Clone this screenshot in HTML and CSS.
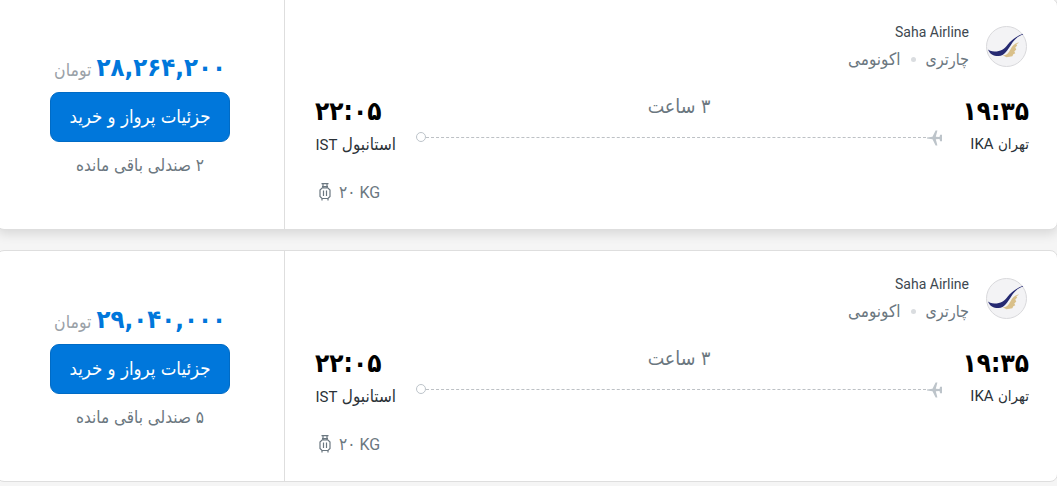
FILE: index.html
```
<!DOCTYPE html>
<html lang="fa" dir="rtl">
<head>
  <meta charset="UTF-8">
  <title>Flights</title>
  <link rel="stylesheet" href="styles.css">
</head>
<body>

  <svg width="0" height="0" class="sprite">
    <symbol id="plane" viewBox="0 0 16 16">
      <path d="M1 7.500 6.500 6.700 9.600.500h1.800L9.800 6.700l3.700.2.600-2.200H16v6.600h-1.900L13.500 9.100l-3.700.2 1.600 6.200H9.600L6.500 9.300 1 8.500Z" fill="#bdc4ca"/>
    </symbol>
    <symbol id="bag" viewBox="0 0 12 18">
      <path d="M2.500.7h7M4 1v4M8 1v4M3 3.700h6M3 5h6l2 2v6.500l-2 2H3l-2-2V7ZM4.500 7.500v5.500M7.500 7.500v5.500M3 15.500v2M9 15.500v2" fill="none" stroke="#6b7780" stroke-width="1.200"/>
    </symbol>
    <symbol id="saha" viewBox="0 0 40 40">
      <path d="M33 16c-4 0-7 3-9 7-2 4-4 6-8 6l4 2 6-1 1-2 2-1-1-2 2-2-1-2 2-2-1-1 3-2Z" fill="#d9c08a"/>
      <path d="M1 23c3 2 6 2 9 2 6 0 9-4 13-9 4-4 8-7 14-9v.8c-6 2-9 5-12 10-4 6-7 12-13 12C7 30 3 28 1 23Z" fill="#262a72"/>
    </symbol>
  </svg>

  <div class="list">
    <div class="card">
      <div class="flight">
        <div class="airline">
          <div class="logo"><svg width="39" height="39"><use href="#saha"/></svg></div>
          <div>
            <div class="name">Saha Airline</div>
            <div class="tags"><span class="charter">چارتری</span><i class="dot"></i><span class="economy">اکونومی</span></div>
          </div>
        </div>
        <div class="route">
          <div class="stop">
            <div class="time">۱۹:۳۵</div>
            <div class="city"><span>تهران</span> <b>IKA</b></div>
          </div>
          <div class="path">
            <div class="duration">۳ ساعت</div>
            <div class="track">
              <svg width="16" height="16"><use href="#plane"/></svg>
              <span class="line"></span>
              <span class="ring"></span>
            </div>
          </div>
          <div class="stop end">
            <div class="time">۲۲:۰۵</div>
            <div class="city"><span>استانبول</span> <b>IST</b></div>
          </div>
        </div>
        <div class="baggage" dir="ltr">
          <svg width="12" height="18"><use href="#bag"/></svg>
          <span><span class="num">۲۰</span> KG</span>
        </div>
      </div>
      <div class="buy">
        <div class="price"><strong>۲۸,۲۶۴,۲۰۰</strong><span>تومان</span></div>
        <button class="btn">جزئیات پرواز و خرید</button>
        <div class="seats">۲ صندلی باقی مانده</div>
      </div>
    </div>

    <div class="card">
      <div class="flight">
        <div class="airline">
          <div class="logo"><svg width="39" height="39"><use href="#saha"/></svg></div>
          <div>
            <div class="name">Saha Airline</div>
            <div class="tags"><span class="charter">چارتری</span><i class="dot"></i><span class="economy">اکونومی</span></div>
          </div>
        </div>
        <div class="route">
          <div class="stop">
            <div class="time">۱۹:۳۵</div>
            <div class="city"><span>تهران</span> <b>IKA</b></div>
          </div>
          <div class="path">
            <div class="duration">۳ ساعت</div>
            <div class="track">
              <svg width="16" height="16"><use href="#plane"/></svg>
              <span class="line"></span>
              <span class="ring"></span>
            </div>
          </div>
          <div class="stop end">
            <div class="time">۲۲:۰۵</div>
            <div class="city"><span>استانبول</span> <b>IST</b></div>
          </div>
        </div>
        <div class="baggage" dir="ltr">
          <svg width="12" height="18"><use href="#bag"/></svg>
          <span><span class="num">۲۰</span> KG</span>
        </div>
      </div>
      <div class="buy">
        <div class="price"><strong>۲۹,۰۴۰,۰۰۰</strong><span>تومان</span></div>
        <button class="btn">جزئیات پرواز و خرید</button>
        <div class="seats">۵ صندلی باقی مانده</div>
      </div>
    </div>
  </div>

</body>
</html>
```
FILE: styles.css
```
* {
  box-sizing: border-box;
}

body {
  margin: 0;
  height: 486px;
  background: #f5f5f5;
  font-family: "DejaVu Sans Condensed", "DejaVu Sans", sans-serif;
  font-stretch: condensed;
  color: #6b7780;
  overflow: hidden;
}

.sprite {
  position: absolute;
}

.list {
  margin: -2px -1px 0 -4px;
}

.card {
  display: flex;
  height: 232px;
  margin-bottom: 20px;
  background: #fff;
  border: 1px solid #dedede;
  border-radius: 8px;
}

.card:first-child {
  box-shadow: 0 4px 12px rgba(0, 0, 0, 0.12);
}

.flight {
  flex: 1;
  padding: 20px 28px 0 30px;
}

.airline {
  display: flex;
  gap: 17px;
  height: 56px;
}

.logo {
  width: 41px;
  height: 41px;
  margin: 7px 2px 0 0;
  border: 1px solid #d9d9dc;
  border-radius: 50%;
  background: #f3f3f5;
}

.logo svg {
  display: block;
}

.name {
  font: 14px/26px Roboto, sans-serif;
  color: #3e4850;
  white-space: nowrap;
}

.tags {
  display: flex;
  align-items: center;
  height: 28px;
  font-size: 16px;
}

.dot {
  width: 5px;
  height: 5px;
  margin: 0 10px;
  border-radius: 50%;
  background: #dadde0;
}

.economy {
  font-size: 17px;
}

.route {
  display: flex;
  height: 94px;
  padding-top: 18px;
}

.time {
  font-size: 26px;
  font-weight: bold;
  line-height: 36px;
  color: #000;
}

.city {
  font-size: 15px;
  line-height: 30px;
  color: #2b3238;
  white-space: nowrap;
}

.city b {
  font: 15px Roboto, sans-serif;
}

.stop {
  width: 87px;
}

.end {
  width: 101px;
  direction: ltr;
}

.end .city {
  direction: rtl;
  text-align: right;
  width: 81px;
}

.end .city span {
  font-size: 17px;
}

.path {
  flex: 1;
}

.duration {
  font-size: 19.5px;
  line-height: 27px;
  text-align: center;
}

.track {
  display: flex;
  align-items: center;
  height: 34px;
}

.track svg {
  margin-top: 2px;
}

.line {
  flex: 1;
  border-top: 1px dashed #bdc1c5;
}

.ring {
  width: 10px;
  height: 10px;
  border: 1px solid #bdc4ca;
  border-radius: 50%;
}

.baggage {
  display: flex;
  align-items: center;
  gap: 8px;
  height: 38px;
  padding: 7px 0 0 4px;
  font: 16px Roboto, sans-serif;
}

.num {
  font: 17px "DejaVu Sans Condensed", "DejaVu Sans", sans-serif;
}

.buy {
  display: flex;
  flex-direction: column;
  align-items: center;
  width: 288px;
  padding: 50px 4px 0 3px;
  border-right: 1px solid #dedede;
}

.price {
  display: flex;
  align-items: baseline;
  gap: 5px;
  height: 43px;
  line-height: 36px;
}

.price strong {
  font-size: 25.5px;
  color: #0077db;
}

.price span {
  font-size: 17.5px;
  color: #9aa1a7;
}

.btn {
  width: 180px;
  height: 50px;
  padding: 0 0 2px;
  border: 1px solid #006bc5;
  border-radius: 9px;
  background: #0077db;
  color: #fff;
  font-family: inherit;
  font-stretch: condensed;
  font-size: 18.5px;
}

.seats {
  font-size: 17px;
  line-height: 47px;
}
```
